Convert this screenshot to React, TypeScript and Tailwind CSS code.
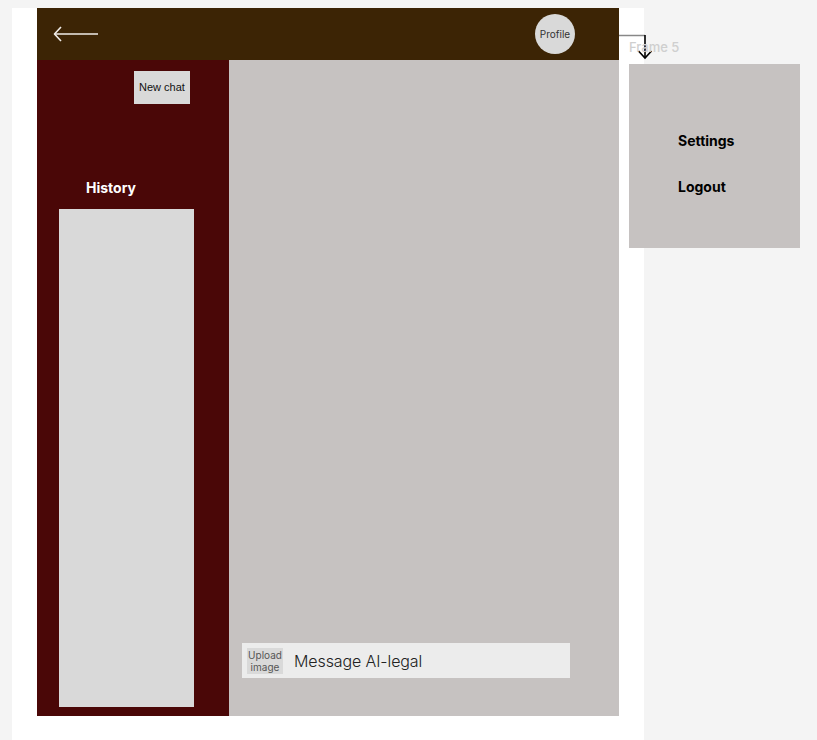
export default function App() {
  return (
    <div className="relative h-[740px] w-[817px] overflow-hidden bg-[#f4f4f4] font-['Inter',sans-serif]">
      {/* main frame */}
      <div className="ml-[12px] mt-[8px] h-[732px] w-[632px] bg-white pl-[25px]">
        <div className="flex h-[708px] w-[582px] flex-col">
          <header className="flex h-[52px] items-center justify-between bg-[#3c2405] pl-[16px] pr-[44px]">
            <svg width="46" height="16" viewBox="0 0 46 16" fill="none" stroke="#f0ece8" strokeWidth="1.6">
              <path d="M45 8H2" />
              <path d="M8 1L1.5 8L8 15" strokeLinejoin="round" />
            </svg>
            <div className="flex h-[40px] w-[40px] items-center justify-center rounded-full bg-[#d9d9d9] text-[10px] text-[#333]">
              Profile
            </div>
          </header>
          <div className="flex flex-1">
            <aside className="flex w-[192px] flex-col bg-[#4a0707] pb-[9px]">
              <div className="mt-[11px] flex justify-end pr-[39px]">
                <button className="h-[33px] w-[56px] bg-[#d9d9d9] font-['Liberation_Sans',sans-serif] text-[11px] text-[#111]">
                  New chat
                </button>
              </div>
              <div className="mt-[77px] pl-[49px] text-[14px] font-bold leading-none text-white">History</div>
              <div className="ml-[22px] mt-[14px] w-[135px] flex-1 bg-[#d9d9d9]" />
            </aside>
            <main className="flex flex-1 flex-col justify-end bg-[#c6c2c1] pb-[38px] pl-[13px]">
              <div className="flex h-[35px] w-[328px] items-center gap-[11px] bg-[#ececec] pl-[5px]">
                <div className="flex h-[26px] w-[36px] flex-col items-center justify-center bg-[#d9d9d9] text-[10px] leading-[12px] text-[#555]">
                  <span>Upload</span>
                  <span>image</span>
                </div>
                <span className="text-[16px] font-light tracking-[-0.1px] text-[#222]">Message AI-legal</span>
              </div>
            </main>
          </div>
        </div>
      </div>

      {/* prototype connector */}
      <svg className="absolute left-[619px] top-[30px]" width="40" height="32" viewBox="0 0 40 32" fill="none">
        <path d="M0 5.5H26" stroke="#888" strokeWidth="1.5" />
        <path d="M26 5V27" stroke="#000" strokeWidth="1.6" />
        <path d="M19.5 21L26 28L32.5 21" stroke="#000" strokeWidth="1.6" />
      </svg>

      {/* Frame 5 */}
      <div className="absolute left-[629px] top-[41px] text-[13px] font-medium leading-none text-[#cfcfcf]">Frame 5</div>
      <div className="absolute left-[629px] top-[64px] flex h-[184px] w-[171px] flex-col bg-[#c6c2c1] pl-[49px] pt-[70px] text-[14px] font-bold leading-none text-black">
        <span>Settings</span>
        <span className="mt-[32px]">Logout</span>
      </div>
    </div>
  );
}
